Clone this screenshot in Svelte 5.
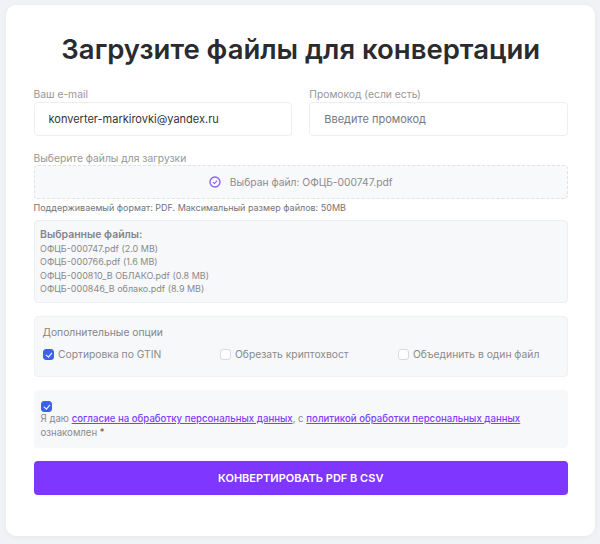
<script>
  let email = 'konverter-markirovki@yandex.ru';
  let promo = '';
  const files = [
    'ОФЦБ-000747.pdf (2.0 MB)',
    'ОФЦБ-000766.pdf (1.6 MB)',
    'ОФЦБ-000810_В ОБЛАКО.pdf (0.8 MB)',
    'ОФЦБ-000846_В облако.pdf (8.9 MB)'
  ];
</script>

<div class="page">
  <form class="card" on:submit|preventDefault>
    <h1>Загрузите файлы для конвертации</h1>

    <div class="fields">
      <label class="field">
        <span class="label">Ваш e-mail</span>
        <input type="text" bind:value={email} />
      </label>
      <label class="field">
        <span class="label">Промокод (если есть)</span>
        <input type="text" placeholder="Введите промокод" bind:value={promo} />
      </label>
    </div>

    <div class="upload">
      <span class="label">Выберите файлы для загрузки</span>
      <div class="drop">
        <svg width="12" height="12" viewBox="0 0 12 12" fill="none" stroke="#8b5cf6">
          <circle cx="6" cy="6" r="5" stroke-width="1.3" />
          <path d="M3.8 6.2 5.4 7.6 8.2 4.6" stroke-width="1.1" />
        </svg>
        <span>Выбран файл: ОФЦБ-000747.pdf</span>
      </div>
      <p class="hint">Поддерживаемый формат: PDF. Максимальный размер файлов: 50MB</p>
    </div>

    <div class="selected">
      <strong>Выбранные файлы:</strong>
      {#each files as file}
        <div>{file}</div>
      {/each}
    </div>

    <div class="options">
      <div class="options-title">Дополнительные опции</div>
      <div class="options-row">
        <label class="check"><input type="checkbox" checked />Сортировка по GTIN</label>
        <label class="check"><input type="checkbox" />Обрезать криптохвост</label>
        <label class="check"><input type="checkbox" />Объединить в один файл</label>
      </div>
    </div>

    <div class="consent">
      <input type="checkbox" checked />
      <div class="consent-text">
        Я даю <a href="#consent">согласие на обработку персональных данных</a>, с <a href="#policy">политикой обработки персональных данных</a> ознакомлен <span class="req">*</span>
      </div>
    </div>

    <button type="submit">КОНВЕРТИРОВАТЬ PDF В CSV</button>
  </form>
</div>

<style>
  :global(body) {
    background: #f1f2f5;
    font-family: Inter, "Liberation Sans", sans-serif;
  }

  .page {
    padding: 5px 5px 8px 6px;
    box-sizing: border-box;
  }

  .card {
    background: #fff;
    border-radius: 10px;
    box-shadow: 0 1px 6px rgba(0, 0, 0, 0.04);
    padding: 27px 27px 41px 27.5px;
    height: 531px;
    box-sizing: border-box;
  }

  h1 {
    margin: 0 0 21px;
    font-size: 27.5px;
    line-height: 34px;
    font-weight: 600;
    color: #2b2b2f;
    text-align: center;
  }

  .fields {
    display: grid;
    grid-template-columns: 1fr 1fr;
    gap: 17px;
    margin-bottom: 15px;
  }

  .field {
    display: block;
  }

  .label {
    display: block;
    font-size: 10.3px;
    line-height: 14px;
    color: #979799;
    margin-bottom: 1px;
  }

  .upload .label {
    margin-bottom: 0;
  }

  input[type='text'] {
    display: block;
    width: 100%;
    height: 34px;
    box-sizing: border-box;
    padding: 0 14px;
    border: 1px solid #eceef1;
    border-radius: 4px;
    font: 11px Inter, "Liberation Sans", sans-serif;
    color: #333338;
    outline: none;
  }

  input[type='text']::placeholder {
    color: #75787f;
    opacity: 1;
  }

  .drop {
    height: 34px;
    box-sizing: border-box;
    background: #f8f9fb;
    border: 1px dashed #dfe1e6;
    border-radius: 4px;
    display: flex;
    align-items: center;
    justify-content: center;
    gap: 9px;
    font-size: 10.3px;
    color: #8c8c8e;
  }

  .hint {
    margin: 2px 0 5px;
    font-size: 9px;
    line-height: 14px;
    color: #737478;
  }

  .selected {
    height: 83px;
    box-sizing: border-box;
    background: #f7f8fa;
    border: 1px solid #edeef1;
    border-radius: 4px;
    padding: 7px 5.5px;
    font-size: 9px;
    line-height: 13.4px;
    color: #8a8a8c;
    margin-bottom: 13px;
  }

  .selected strong {
    display: block;
    font-size: 10.5px;
    font-weight: 600;
    line-height: 14px;
    color: #85868a;
  }

  .options {
    height: 61px;
    box-sizing: border-box;
    background: #f7f8fa;
    border: 1px solid #f0f1f4;
    border-radius: 4px;
    padding: 8px 8px;
    margin-bottom: 13px;
  }

  .options-title {
    font-size: 10.3px;
    line-height: 14px;
    color: #858688;
    margin-bottom: 8px;
  }

  .options-row {
    display: grid;
    grid-template-columns: 177px 178px 1fr;
  }

  .check {
    display: flex;
    align-items: center;
    gap: 4.5px;
    font-size: 10.3px;
    line-height: 14px;
    color: #8a8a8c;
  }

  input[type='checkbox'] {
    appearance: none;
    position: relative;
    flex: none;
    width: 11px;
    height: 11px;
    margin: 0;
    box-sizing: border-box;
    background: #fff;
    border: 1px solid #d9dadd;
    border-radius: 3px;
  }

  input[type='checkbox']:checked {
    background: #3b63ea;
    border-color: #3b63ea;
  }

  input[type='checkbox']:checked::after {
    content: '';
    position: absolute;
    left: 3px;
    top: 1px;
    width: 2.5px;
    height: 5px;
    border: solid #fff;
    border-width: 0 1.4px 1.4px 0;
    transform: rotate(40deg);
  }

  .consent {
    height: 58px;
    box-sizing: border-box;
    background: #f7f8fa;
    border-radius: 4px;
    padding: 11px 7px 0;
    margin-bottom: 13px;
  }

  .consent input {
    display: block;
  }

  .consent-text {
    font-size: 9.65px;
    line-height: 14px;
    color: #8a8a8c;
  }

  .consent a {
    color: #7f3fff;
    font-weight: 500;
  }

  .req {
    color: #8a4b2f;
  }

  button {
    display: block;
    width: 100%;
    height: 34px;
    border: 0;
    border-radius: 4px;
    background: #7f36ff;
    color: #fff;
    font: 600 11px Inter, "Liberation Sans", sans-serif;
  }
</style>
